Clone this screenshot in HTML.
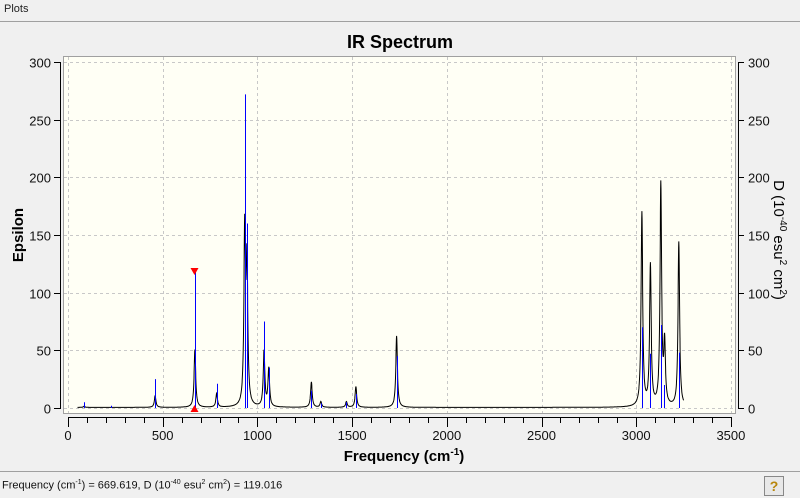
<!DOCTYPE html>
<html><head><style>
body{margin:0;width:800px;height:497px;background:#f0f0f0;font-family:"Liberation Sans",sans-serif;overflow:hidden;position:relative}
#top{position:absolute;left:0;top:0;width:800px;height:21px;border-bottom:1px solid #a0a0a0;font-size:11px;color:#222}
#top span{position:absolute;left:4px;top:3px}
#stat{position:absolute;left:0;top:471px;width:800px;height:26px;border-top:1px solid #a0a0a0;font-size:11px;color:#111}
#stat span{position:absolute;left:2px;top:7px}
#help{position:absolute;left:764px;top:476px;width:18px;height:18px;border:1px solid #888;background:#e8e8e8;font-weight:bold;color:#b8860b;font-size:14px;text-align:center;line-height:18px}
</style></head><body>
<div id="top"><span>Plots</span></div>
<svg id="s" width="800" height="470" style="position:absolute;left:0;top:0" font-family="Liberation Sans, sans-serif">
<text x="400" y="48" text-anchor="middle" font-size="18" font-weight="bold">IR Spectrum</text>
<rect x="63.5" y="56.5" width="672" height="357" fill="#fffff5" stroke="#a0a0a0"/>
<g id="grid" stroke="#c8c8c8" stroke-dasharray="3,3"></g>
<g id="ax" stroke="#000" fill="none"></g>
<g id="lab" font-size="13" fill="#111"></g>
<path id="curve" fill="none" stroke="#000" stroke-width="1"/>
<g id="blue" stroke="#0000ff" stroke-width="1"></g>
<polygon points="190.5,268 198.5,268 194.5,275" fill="#f00"/>
<polygon points="190.5,412 198.5,412 194.5,405" fill="#f00"/>
<text x="404" y="461" text-anchor="middle" font-size="15" font-weight="bold">Frequency (cm<tspan font-size="10" dy="-6">-1</tspan><tspan dy="6">)</tspan></text>
<text transform="translate(23,235) rotate(-90)" text-anchor="middle" font-size="15" font-weight="bold">Epsilon</text>
<text transform="translate(774,240) rotate(90)" text-anchor="middle" font-size="15">D (10<tspan font-size="10" dy="-6">-40</tspan><tspan dy="6"> esu</tspan><tspan font-size="10" dy="-6">2</tspan><tspan dy="6"> cm</tspan><tspan font-size="10" dy="-6">2</tspan><tspan dy="6">)</tspan></text>
</svg>
<div id="stat"><span>Frequency (cm<sup style="font-size:7px">-1</sup>) = 669.619, D (10<sup style="font-size:7px">-40</sup> esu<sup style="font-size:7px">2</sup> cm<sup style="font-size:7px">2</sup>) = 119.016</span></div>
<div id="help">?</div>
<script>
var NS="http://www.w3.org/2000/svg";
function X(f){return 68+f*0.1894}
function Y(v){return 408-v*1.153}
function el(p,t,a,txt){var e=document.createElementNS(NS,t);for(var k in a)e.setAttribute(k,a[k]);if(txt!=null)e.textContent=txt;document.getElementById(p).appendChild(e);}
for(var f=0;f<=3500;f+=500){var x=Math.round(X(f))+.5;el("grid","line",{x1:x,x2:x,y1:57,y2:413});
 el("lab","text",{x:X(f),y:440,"text-anchor":"middle"},f);}
for(var v=0;v<=300;v+=50){var y=Math.round(Y(v))+.5;el("grid","line",{x1:64,x2:735,y1:y,y2:y});
 el("ax","line",{x1:54,x2:60,y1:y,y2:y});el("ax","line",{x1:738,x2:744,y1:y,y2:y});
 el("lab","text",{x:51,y:y+5,"text-anchor":"end"},v);el("lab","text",{x:748,y:y+5},v);}
el("ax","line",{x1:60.5,x2:60.5,y1:62,y2:409});el("ax","line",{x1:738.5,x2:738.5,y1:62,y2:409});
el("ax","line",{x1:68,x2:731,y1:417.5,y2:417.5});
for(var f=0;f<=3500;f+=100){var x=Math.round(X(f))+.5;el("ax","line",{x1:x,x2:x,y1:417,y2:f%500==0?427:423});}
var sticks=[[85,5],[225,2],[460,25],[670,119],[785,21],[935,272],[945,160],[1035,75],[1060,35],[1285,15],[1335,4],[1470,5],[1520,12],[1735,45],[3030,70],[3075,47],[3130,72],[3145,20],[3225,48]];
sticks.forEach(function(s){var x=Math.round(X(s[0]))+.5;el("blue","line",{x1:x,x2:x,y1:408,y2:Y(s[1])});});
var pk=[[85,1],[460,10],[670,50],[785,12],[933,150],[945,120],[1035,48],[1060,33],[1285,22],[1335,5],[1470,5],[1520,18],[1735,62],[3030,168],[3075,122],[3130,192],[3150,52],[3225,143]];
var d="",g=5;
for(var f=50;f<=3250;f+=1){var v=0;pk.forEach(function(p){var u=(f-p[0])/g;v+=p[1]/(1+u*u);});
 d+=(f==50?"M":"L")+X(f).toFixed(1)+","+Y(v+0.5).toFixed(1);}
document.getElementById("curve").setAttribute("d",d);
</script>
</body></html>
